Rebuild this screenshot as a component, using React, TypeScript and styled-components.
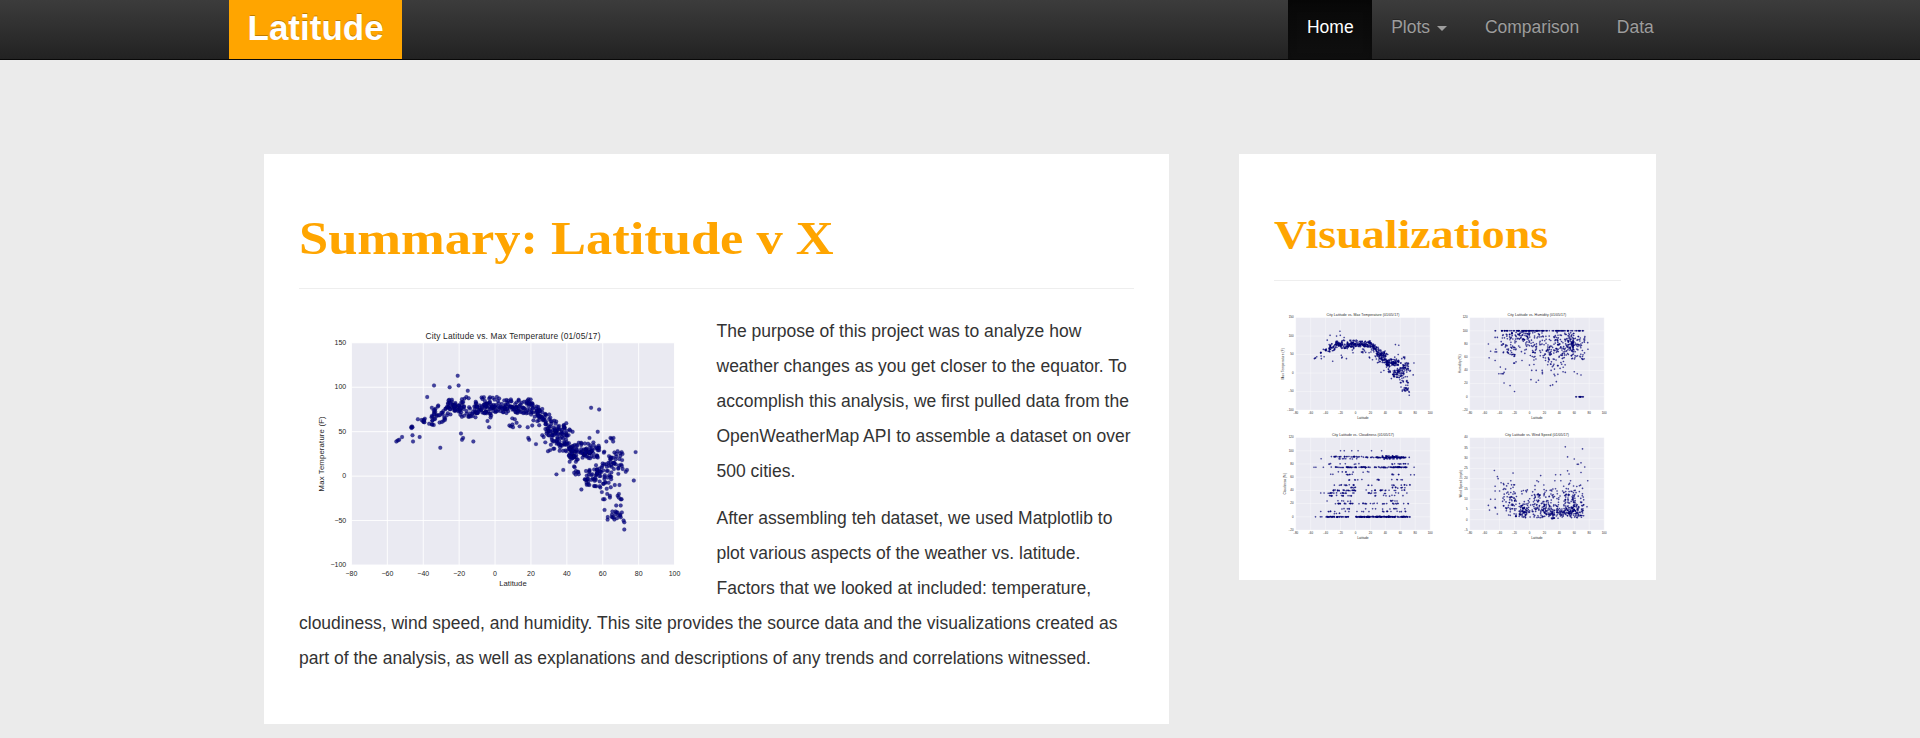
import React from "react";
import styled, { createGlobalStyle } from "styled-components";

const GlobalStyle = createGlobalStyle`
  *, *::before, *::after { box-sizing: border-box; }
  body {
    margin: 0;
    background: #ebebeb;
    color: #333;
    font-family: "Liberation Sans", Arial, sans-serif;
    font-size: 17.5px;
    line-height: 35px;
  }
`;

const Page = styled.div`
  height: 738px;
  overflow: hidden;
`;

const Navbar = styled.header`
  height: 60px;
  background: linear-gradient(to bottom, #3c3c3c 0%, #222 100%);
  border-bottom: 1px solid #080808;
`;

const NavInner = styled.div`
  display: flex;
  justify-content: space-between;
  width: 1462.5px;
  height: 59px;
  margin: 0 auto;
  padding-right: 18.75px;
`;

const Brand = styled.a`
  width: 173px;
  padding-left: 18.75px;
  background: #ffa500;
  color: #fff;
  font-size: 35px;
  font-weight: bold;
  line-height: 55px;
  text-decoration: none;
  text-shadow: 0 -1px 0 rgba(0, 0, 0, 0.25);
`;

const NavList = styled.nav`
  display: flex;
`;

const NavLink = styled.a<{ $active?: boolean }>`
  display: flex;
  align-items: center;
  height: 59px;
  padding: 0 18.75px 4px;
  line-height: 25px;
  text-decoration: none;
  text-shadow: 0 -1px 0 rgba(0, 0, 0, 0.25);
  color: ${(p) => (p.$active ? "#fff" : "#9d9d9d")};
  background: ${(p) => (p.$active ? "linear-gradient(to bottom, #080808, #0f0f0f)" : "none")};
  box-shadow: ${(p) => (p.$active ? "inset 0 3px 9px rgba(0, 0, 0, 0.25)" : "none")};
`;

const Caret = styled.span`
  margin: 2px 0 0 7.4px;
  border-top: 5px solid;
  border-left: 5px solid transparent;
  border-right: 5px solid transparent;
`;

const Columns = styled.main`
  display: flex;
  align-items: flex-start;
  justify-content: space-between;
  width: 1392px;
  margin: 94px auto 0;
`;

const Card = styled.section<{ $width: number; $height: number }>`
  width: ${(p) => p.$width}px;
  height: ${(p) => p.$height}px;
  padding: 60px 35px 0;
  background: #fff;
`;

const Title = styled.h1<{ $size: number; $line: number; $stretch: number }>`
  width: max-content;
  height: ${(p) => p.$line}px;
  margin: 0 0 25px;
  color: #ffa500;
  font-family: "Liberation Serif", "Times New Roman", serif;
  font-size: ${(p) => p.$size}px;
  font-weight: bold;
  line-height: ${(p) => p.$line}px;
  white-space: nowrap;
  transform: scaleX(${(p) => p.$stretch});
  transform-origin: left;
`;

const Rule = styled.hr`
  height: 1px;
  margin: 0;
  border: 0;
  background: #eee;
`;

const Story = styled.div`
  padding-top: 25px;
`;

const Lead = styled.div`
  float: left;
  width: 417.5px;
  height: 278px;
  margin-top: 0.8px;
`;

const Paragraph = styled.p`
  margin: 0 0 12px;
`;

const Gallery = styled.div`
  display: grid;
  grid-template-columns: 1fr 1fr;
  row-gap: 4px;
  padding-top: 25px;
`;

const Thumb = styled.a`
  display: block;
  height: 115.7px;
`;

const Chart = styled.svg`
  display: block;
  width: 100%;
  height: 100%;
  font-family: "Liberation Sans", Arial, sans-serif;
  fill: #262626;
`;

type Point = [number, number];
/* latMin, latMax, count, center, spread, min, max */
type Band = [number, number, number, number, number, number, number];

function makeRandom(seed: number) {
  let s = seed;
  return () => {
    s = (s * 1664525 + 1013904223) % 4294967296;
    return s / 4294967296;
  };
}

function scatter(bands: Band[], extra: Point[], seed: number): Point[] {
  const rnd = makeRandom(seed);
  const out: Point[] = [...extra];
  bands.forEach(([a, b, n, mid, sd, lo, hi]) => {
    for (let i = 0; i < n; i++) {
      const lat = a + (b - a) * rnd();
      let v = mid;
      for (let k = 0; k < 12; k++) {
        v = mid + (rnd() + rnd() + rnd() - 1.5) * 2.7 * sd;
        if (v >= lo && v <= hi) break;
      }
      out.push([lat, Math.min(hi, Math.max(lo, v))]);
    }
  });
  return out;
}

const temperature = scatter(
  [
    [-41, -35, 8, 62, 4, 56, 68],
    [-35.5, -32.5, 20, 69, 5, 57, 78],
    [-32, -26, 22, 73, 5, 60, 82],
    [-26, -20, 34, 78, 4.5, 66, 87],
    [-20, -10, 34, 76, 7, 64, 88],
    [-15, -10, 10, 68, 3, 61, 73],
    [-10, 0, 56, 79, 5, 68, 90],
    [0, 10, 46, 78, 4, 71, 88],
    [10, 20, 44, 79, 4, 70, 87],
    [19, 22, 14, 76, 5, 62, 83],
    [22, 25, 16, 72, 5, 60, 79],
    [24, 29, 22, 67, 5, 55, 76],
    [28, 31, 16, 58, 8, 44, 74],
    [30.5, 35, 38, 48, 9, 28, 63],
    [35, 40, 36, 44, 10, 26, 61],
    [38, 42, 16, 36, 9, 17, 56],
    [41, 45, 32, 25, 6, 14, 42],
    [45, 50, 24, 29, 6, 12, 38],
    [50, 54, 32, 28, 4, 20, 37],
    [54, 58, 16, 29, 4, 18, 36],
    [44, 47, 8, 5, 4, 0, 12],
    [50, 55, 20, 1, 6, -11, 8],
    [55, 59, 26, 2, 7, -14, 16],
    [59, 65, 34, 4, 9, -15, 30],
    [64, 71.5, 26, 17, 8, 2, 28],
    [64, 71, 16, -44, 3.5, -49, -38],
  ],
  [
    [-55, 39], [-54.2, 40], [-53.4, 41], [-51.8, 44], [-46.7, 55], [-46.3, 56], [-46, 55], [-46.5, 54],
    [-46, 46], [-45.7, 39], [-42, 44], [-43, 64], [-30.5, 32], [-34, 102], [-37.8, 89], [-25.3, 100],
    [-20.8, 113], [-20.3, 102], [-15.2, 96], [-16, 89], [-19, 48], [-17.8, 43], [-18.4, 41], [-12.1, 39],
    [-3.3, 55], [-2.5, 66], [-4.2, 62], [1, 89], [8, 57], [8.8, 56], [9.7, 58], [10, 55], [9.6, 65],
    [11, 64], [12, 60], [13.7, 56], [18.2, 55], [20.7, 57], [18.5, 43], [19, 41], [22.8, 36], [26.3, 46],
    [27.1, 44], [28, 38], [29.5, 28], [34.2, 2], [38, 7], [48.1, -15], [53.5, 77], [58, 75], [57.2, 50],
    [52.6, 43], [54.8, 38], [43.2, 50], [62, 39], [64.3, 43], [65, 42], [66, 43], [65.8, 39], [78.3, 27],
    [77.3, -5], [73.5, 7], [72.8, 5], [59.5, -18], [60.2, -26], [61, -26], [62.5, -20], [64, -22],
    [64, -24], [68.3, -22], [69, -20], [70.5, -26], [70, -26], [68.9, -24], [67.5, -33], [70, -33],
    [61, -38], [62.8, -46], [62.7, -49], [71.6, -50], [72, -52], [72, -60], [69.3, -10], [66.7, -10],
    [71, 25], [70.8, 18], [70.5, 27],
  ],
  17
);

const humidity = scatter(
  [
    [-38, -20, 20, 100, 0, 100, 100],
    [-20, 20, 60, 100, 0, 100, 100],
    [20, 73, 50, 100, 0, 100, 100],
    [-38, -28, 26, 83, 11, 64, 97],
    [-28, -17, 44, 85, 13, 61, 98],
    [-17, 1, 56, 94, 5, 72, 99],
    [-15, 2, 8, 74, 8, 62, 85],
    [2, 20, 52, 83, 14, 55, 98],
    [20, 34, 56, 70, 16, 44, 98],
    [34, 48, 70, 73, 17, 44, 98],
    [48, 60, 80, 83, 10, 62, 97],
    [56, 75, 60, 74, 10, 56, 92],
    [66, 72.5, 10, 0, 0, 0, 0],
  ],
  [
    [-55, 80], [-52, 69], [-54, 59], [-46, 100], [-45.4, 100], [-46, 90], [-43, 90], [-45, 72], [-44, 68],
    [-46, 68], [-46, 55], [-39, 45], [-41, 35], [-38, 35], [-36, 35], [-35, 35], [-34, 37], [-32, 42],
    [-34, 21], [-26, 17], [-20, 8], [-21, 51], [-20, 51], [-18, 53], [-10, 55], [2, 26], [9, 22], [12, 25],
    [3, 40], [9, 40], [0, 48], [6, 49], [17, 40], [17.3, 37], [17.3, 35], [28, 17], [31, 18], [36, 23],
    [34, 32], [33, 34], [38, 34], [41, 43], [29, 40], [33.5, 42], [45, 38], [48, 37], [60, 38], [64, 35],
    [69, 33], [62, 0], [63, 0], [78, 82], [78.3, 72], [74, 86], [70, 58],
  ],
  43
);

const cloudiness = scatter(
  (
    [
      [-41, -24, 26, 0], [-23, -8, 16, 0], [0, 20, 46, 0], [15, 50, 76, 0], [50, 73, 38, 0],
      [-30, -20, 4, 5], [-38, -25, 5, 8], [-15, 20, 6, 8], [28, 74, 12, 8], [-20, -8, 5, 12], [10, 70, 10, 12],
      [-27, -20, 8, 20], [-16, -2, 9, 20], [3, 45, 14, 20], [50, 71, 10, 20], [-27, 0, 5, 24], [45, 65, 6, 24],
      [-38, -25, 6, 32], [-20, 5, 8, 32], [25, 70, 8, 32], [-37, -25, 8, 36], [-20, -1, 9, 36], [10, 70, 12, 36],
      [-30, -18, 10, 40], [-17, 1, 17, 40], [14, 45, 14, 40], [50, 66, 5, 40], [-8, 0, 6, 44], [48, 70, 9, 44],
      [-30, -2, 12, 48], [15, 22, 3, 48], [48, 73, 9, 48], [-15, 10, 6, 56], [24, 65, 9, 56], [-36, -30, 2, 64],
      [-12, -3, 6, 64], [45, 79, 7, 64], [-35, 20, 8, 68], [-36, -3, 24, 75], [-2, 40, 38, 75], [38, 72, 40, 75],
      [-36, -32, 3, 80], [-22, 5, 5, 80], [48, 72, 12, 80], [-36, -14, 14, 91], [-14, 10, 15, 91],
      [10, 32, 20, 90], [32, 68, 64, 90], [34, 60, 16, 92], [38, 64, 14, 88], [-24, 5, 8, 88],
    ] as [number, number, number, number][]
  ).map(([a, b, n, v]): Band => [a, b, n, v, 0.25, v - 0.7, v + 0.7]),
  [
    [-53.5, 0], [-47, 0], [-45, 0], [-55.5, 75], [-53, 75], [-43, 75], [-46, 88], [-46.5, 36], [-42, 36],
    [-46.5, 8], [-20, 100], [-15, 100], [-5, 100], [3.5, 100], [21.5, 100], [35, 100], [78.5, 75],
    [72, 90], [-38, 24],
  ],
  71
);

const wind = scatter(
  [
    [-36, -28, 24, 9, 4, 2.5, 18],
    [-28, -17, 50, 8, 3.6, 1.5, 16],
    [-14, 1, 70, 4, 1.8, 1, 8.5],
    [-12, 14, 22, 9, 4, 3, 15],
    [3, 17, 32, 8, 4, 2, 19],
    [1, 20, 24, 4, 2, 1, 8],
    [17, 30, 48, 4, 1.8, 1.4, 9],
    [18, 48, 60, 9, 3.8, 3, 18],
    [28, 48, 70, 3.5, 1.6, 0.5, 8],
    [48, 60, 70, 7, 4, 1.5, 18],
    [48, 73, 76, 3.5, 1.8, 1, 9],
    [58, 73, 40, 8, 4, 2, 18],
  ],
  [
    [48, 35.5], [71, 34.5], [51, 30.6], [60, 29.6], [64, 27], [65.5, 27], [69, 27.7], [74, 25.7], [69, 23],
    [51, 23.8], [53, 22.3], [35, 21.9], [41.6, 21.9], [15, 21.5], [-47, 24], [-43, 21], [-42, 20],
    [-38, 18], [-22, 22.7], [-25, 19], [-24, 17], [-21, 17], [-20, 17], [-46, 16.3], [-46, 14], [-40, 14],
    [-52, 10], [-46, 10], [-46, 6], [-45.5, 5.7], [-55, 7], [-53.5, 4.7], [-43, 2.8], [78, 19], [77, 6.3],
    [10, 19], [12, 18.5], [34, 19], [42, 19], [55, 19], [-4, 13.6], [-10, 12.6],
  ],
  101
);

interface FigureProps {
  title: string;
  titleWidth: number;
  yLabel: string;
  yLabelWidth: number;
  yLabelX: number;
  yMin: number;
  yMax: number;
  yStep: number;
  points: Point[];
}

const LEFT = 52.2;
const TOP = 27.8;
const PLOT_W = 323.1;
const PLOT_H = 222.2;

const minus = (n: number) => String(n).replace("-", "−");

function Figure({ title, titleWidth, yLabel, yLabelWidth, yLabelX, yMin, yMax, yStep, points }: FigureProps) {
  const px = (lat: number) => LEFT + ((lat + 80) / 180) * PLOT_W;
  const py = (v: number) => TOP + ((yMax - v) / (yMax - yMin)) * PLOT_H;
  const xTicks = Array.from({ length: 10 }, (_, i) => -80 + i * 20);
  const yTicks = Array.from({ length: Math.round((yMax - yMin) / yStep) + 1 }, (_, i) => yMin + i * yStep);
  const middle = LEFT + PLOT_W / 2;
  return (
    <Chart viewBox="0 0 417 278" role="img" aria-label={title}>
      <rect x={LEFT} y={TOP} width={PLOT_W} height={PLOT_H} fill="#eaeaf2" />
      <g stroke="#fff" strokeWidth={0.9}>
        {xTicks.map((t) => (
          <line key={t} x1={px(t)} x2={px(t)} y1={TOP} y2={TOP + PLOT_H} />
        ))}
        {yTicks.map((t) => (
          <line key={t} x1={LEFT} x2={LEFT + PLOT_W} y1={py(t)} y2={py(t)} />
        ))}
      </g>
      <g fill="#000080" fillOpacity={0.72} stroke="#000030" strokeOpacity={0.3} strokeWidth={0.4}>
        {points.map(([lat, v], i) => (
          <circle key={i} cx={px(lat).toFixed(2)} cy={py(v).toFixed(2)} r={1.95} />
        ))}
      </g>
      <text x={middle} y={23.8} fontSize={8.4} textAnchor="middle" textLength={titleWidth}>
        {title}
      </text>
      <g fontSize={7} textAnchor="middle">
        {xTicks.map((t) => (
          <text key={t} x={px(t)} y={260.6}>{minus(t)}</text>
        ))}
      </g>
      <g fontSize={7} textAnchor="end">
        {yTicks.map((t) => (
          <text key={t} x={47} y={py(t) + 2}>{minus(t)}</text>
        ))}
      </g>
      <text x={middle} y={271.3} fontSize={7.7} textAnchor="middle">Latitude</text>
      <text
        transform={`translate(${yLabelX + 2.5} ${TOP + PLOT_H / 2}) rotate(-90)`}
        fontSize={7.7}
        textAnchor="middle"
        textLength={yLabelWidth}
      >
        {yLabel}
      </text>
    </Chart>
  );
}

const figures: FigureProps[] = [
  {
    title: "City Latitude vs. Max Temperature (01/05/17)", titleWidth: 175,
    yLabel: "Max Temperature (F)", yLabelWidth: 75, yLabelX: 22.5,
    yMin: -100, yMax: 150, yStep: 50, points: temperature,
  },
  {
    title: "City Latitude vs. Humidity (01/05/17)", titleWidth: 141,
    yLabel: "Humidity (%)", yLabelWidth: 45, yLabelX: 28,
    yMin: -20, yMax: 120, yStep: 20, points: humidity,
  },
  {
    title: "City Latitude vs. Cloudiness (01/05/17)", titleWidth: 149,
    yLabel: "Cloudiness (%)", yLabelWidth: 52, yLabelX: 26,
    yMin: -20, yMax: 120, yStep: 20, points: cloudiness,
  },
  {
    title: "City Latitude vs. Wind Speed (01/05/17)", titleWidth: 154,
    yLabel: "Wind Speed (mph)", yLabelWidth: 66, yLabelX: 31,
    yMin: -5, yMax: 40, yStep: 5, points: wind,
  },
];

export default function App() {
  return (
    <Page>
      <GlobalStyle />
      <Navbar>
        <NavInner>
          <Brand>Latitude</Brand>
          <NavList>
            <NavLink $active>Home</NavLink>
            <NavLink>
              Plots
              <Caret />
            </NavLink>
            <NavLink>Comparison</NavLink>
            <NavLink>Data</NavLink>
          </NavList>
        </NavInner>
      </Navbar>
      <Columns>
        <Card $width={905} $height={570}>
          <Title $size={47} $line={49} $stretch={1.116}>Summary: Latitude v X</Title>
          <Rule />
          <Story>
            <Lead>
              <Figure {...figures[0]} />
            </Lead>
            <Paragraph>
              The purpose of this project was to analyze how weather changes as you get closer to the equator. To
              accomplish this analysis, we first pulled data from the OpenWeatherMap API to assemble a dataset on over
              500 cities.
            </Paragraph>
            <Paragraph>
              After assembling teh dataset, we used Matplotlib to plot various aspects of the weather vs. latitude.
              Factors that we looked at included: temperature, cloudiness, wind speed, and humidity. This site provides
              the source data and the visualizations created as part of the analysis, as well as explanations and
              descriptions of any trends and correlations witnessed.
            </Paragraph>
          </Story>
        </Card>
        <Card $width={417} $height={426}>
          <Title as="h2" $size={39} $line={41.25} $stretch={1.179}>Visualizations</Title>
          <Rule />
          <Gallery>
            {figures.map((f) => (
              <Thumb key={f.title}>
                <Figure {...f} />
              </Thumb>
            ))}
          </Gallery>
        </Card>
      </Columns>
    </Page>
  );
}
